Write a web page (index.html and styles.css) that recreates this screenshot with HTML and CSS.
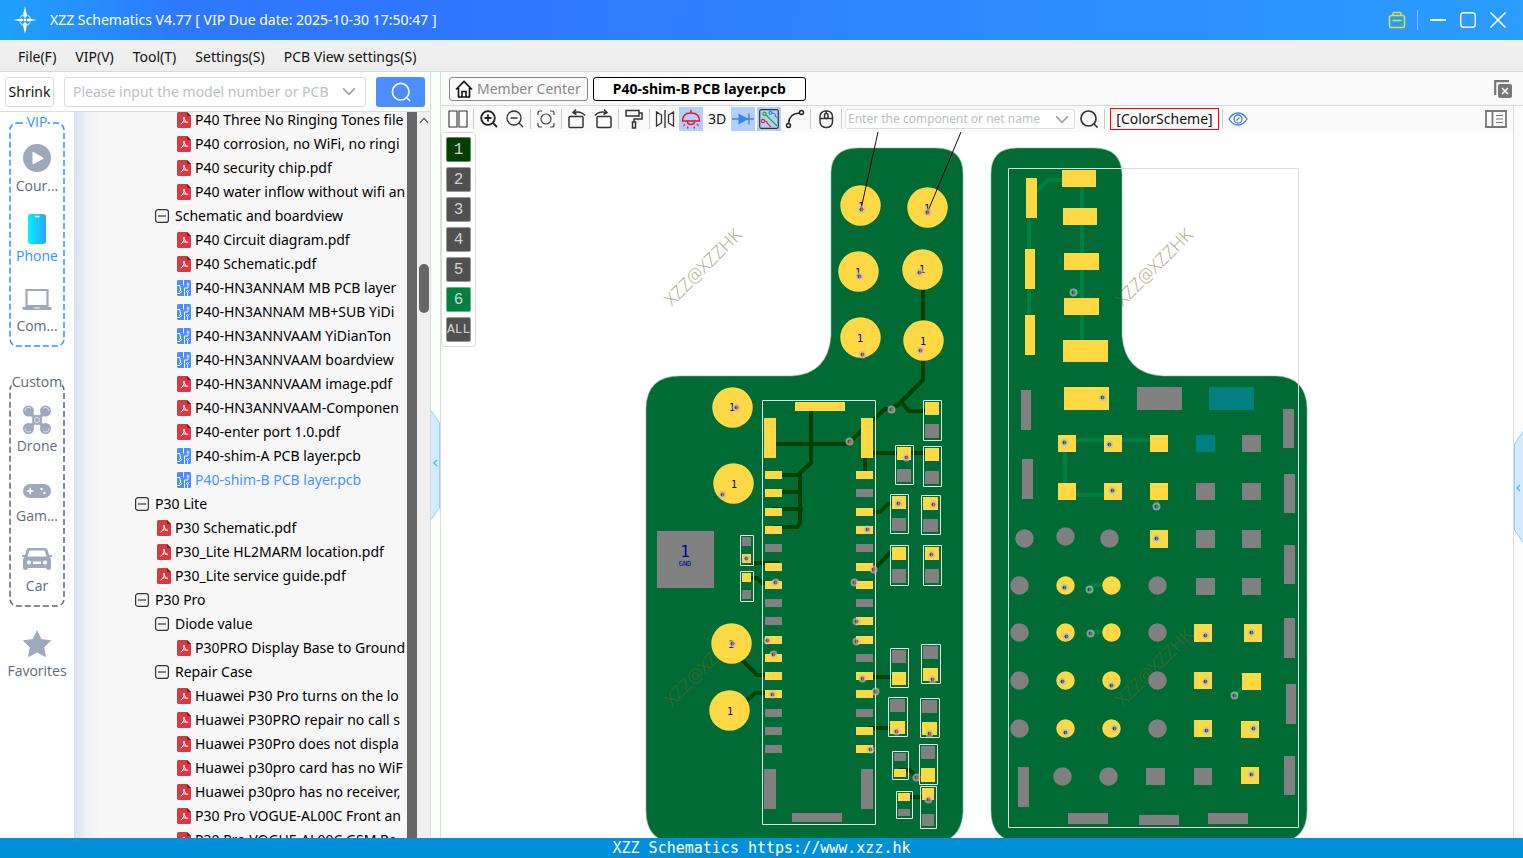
FILE: index.html
```html
<!DOCTYPE html>
<html lang="en">
<head>
<meta charset="utf-8">
<title>XZZ Schematics V4.77</title>
<link rel="stylesheet" href="styles.css">
</head>
<body>
<svg class="defs" width="0" height="0" aria-hidden="true">
  <defs>
    <symbol id="pdf" viewBox="0 0 14 16"><path d="M1.500 0H10l4 4v10.500a1.500 1.500 0 0 1-1.500 1.500h-11A1.500 1.500 0 0 1 0 14.500v-13A1.500 1.500 0 0 1 1.500 0z" fill="#d63a44"/><path d="M10 0v4h4z" fill="#8d1018"/><path d="M7 5.500c0 2.500 1 4 3.500 5M7 5.500c.3 3-.8 5-3 6.300M5.500 10.400c1.500-.8 3-.8 5 0" fill="none" stroke="#fff" stroke-width="1" stroke-linecap="round"/></symbol>
    <symbol id="pcb" viewBox="0 0 14 16"><rect width="14" height="16" rx="1.500" fill="#4a8ffa"/><path d="M6.500 0v5.500M11 5v3H7.500v3.500M3.500 8v3M7.500 11.500V16M10.500 12v4M0 5.500h3v3M0 13.500h3" fill="none" stroke="#fff" stroke-width=".9"/><g fill="#4a8ffa" stroke="#fff" stroke-width=".8"><circle cx="11" cy="4" r="1"/><circle cx="3.500" cy="11.500" r="1"/><circle cx="10.500" cy="11.500" r="1"/></g></symbol>
    <symbol id="minus" viewBox="0 0 14 14"><rect x=".6" y=".6" width="12.800" height="12.800" rx="2.500" fill="none" stroke="#333" stroke-width="1.200"/><path d="M3 7h8" stroke="#333" stroke-width="1.200"/></symbol>
    <symbol id="chev" viewBox="0 0 12 8"><path d="M.8 1.200L6 6.500l5.200-5.300" fill="none" stroke="#999fa8" stroke-width="1.400"/></symbol>
  </defs>
</svg>

<div class="app">
  <header class="titlebar">
    <svg class="logo" viewBox="0 0 26 30" width="26" height="30"><path d="M13 1l2.200 10-2.200 2-2.200-2zM13 29l2.200-10-2.200-2-2.200 2zM1 15l9-1.500 1.500 1.500L10 16.500zM25 15l-9-1.500-1.500 1.500 1.500 1.500z" fill="#fff"/><circle cx="13" cy="15" r="5.500" fill="none" stroke="#a8dcff" stroke-width="1.200" stroke-dasharray="5 3.600" stroke-dashoffset="-2"/><circle cx="13" cy="15" r="1.400" fill="#fff"/></svg>
    <h1 class="title">XZZ Schematics V4.77 [ VIP Due date: 2025-10-30 17:50:47 ]</h1>
    <div class="window-actions">
      <button class="win" aria-label="Toolbox"><svg viewBox="0 0 18 18" width="18" height="18" fill="none" stroke="#d9e342" stroke-width="1.500"><rect x="1.500" y="4.500" width="15" height="12" rx="1.800"/><path d="M5 4.500V2.800q0-1.300 1.300-1.300h5.400Q13 1.500 13 2.800v1.700M4.500 9.500h9"/></svg></button>
      <span class="win-sep"></span>
      <button class="win" aria-label="Minimize"><svg viewBox="0 0 18 18" width="18" height="18"><path d="M1 9h16" stroke="#fff" stroke-width="1.800"/></svg></button>
      <button class="win" aria-label="Maximize"><svg viewBox="0 0 18 18" width="18" height="18"><rect x="1.700" y="1.700" width="14.600" height="14.600" rx="3" fill="none" stroke="#fff" stroke-width="1.400"/></svg></button>
      <button class="win" aria-label="Close"><svg viewBox="0 0 18 18" width="18" height="18"><path d="M1.500 1.500l15 15M16.500 1.500l-15 15" stroke="#fff" stroke-width="1.600"/></svg></button>
    </div>
  </header>

  <nav class="menubar">
    <button>File(F)</button><button>VIP(V)</button><button>Tool(T)</button><button>Settings(S)</button><button>PCB View settings(S)</button>
  </nav>

  <div class="workspace">
    <aside class="left">
      <form class="search">
        <button type="button" class="shrink">Shrink</button>
        <div class="combo combo-model"><input type="text" aria-label="Model number" placeholder="Please input the model number or PCB"><button type="button" aria-label="Show models"><svg width="14" height="9"><use href="#chev"/></svg></button></div>
        <button type="button" class="go" aria-label="Search"><svg viewBox="0 0 20 20" width="20" height="20" fill="none" stroke="#fff" stroke-width="1.600"><circle cx="9.700" cy="9.700" r="8.300"/><path d="M15.500 15.500l3.500 3.300"/></svg></button>
      </form>
      <div class="browser">
        <nav class="categories">
          <section class="group vip">
            <svg class="dash" aria-hidden="true"><rect x="1" y="1" rx="7"/></svg>
            <h2>VIP</h2>
            <button class="cat"><svg viewBox="0 0 30 30"><circle cx="15" cy="15" r="14" fill="#9fa9be"/><path d="M10.500 9.500v11q0 1 1 .5l9.500-5q1-.8 0-1.500l-9.500-5.500q-1-.5-1 .5z" fill="#fff"/></svg><span>Cour...</span></button>
            <button class="cat on"><svg viewBox="0 0 30 30"><defs><linearGradient id="ph"><stop stop-color="#00f2fe"/><stop offset="1" stop-color="#33a3ff"/></linearGradient></defs><rect x="6" y="1" width="18" height="30" rx="3" fill="url(#ph)"/><path d="M13 3.500h4.500" stroke="#fff" stroke-width="1.500"/></svg><span>Phone</span></button>
            <button class="cat"><svg viewBox="0 0 30 30"><path d="M4.500 7h21v16h-21z" fill="none" stroke="#9fa9be" stroke-width="2.200"/><path d="M0 24h30l-1 3H1z" fill="#9fa9be"/><path d="M12.500 25h5" stroke="#fff"/></svg><span>Com...</span></button>
          </section>
          <section class="group custom">
            <svg class="dash" aria-hidden="true"><rect x="1" y="1" rx="7"/></svg>
            <h2>Custom</h2>
            <button class="cat"><svg viewBox="0 0 30 30"><path d="M7 9l16 16M23 9L7 25" stroke="#9fa9be" stroke-width="3.500"/><g fill="#9fa9be"><circle cx="6.500" cy="8" r="5.500"/><circle cx="23.500" cy="8" r="5.500"/><circle cx="6.500" cy="25.500" r="5.500"/><circle cx="23.500" cy="25.500" r="5.500"/><circle cx="15" cy="17" r="5"/></g><g fill="none" stroke="#e2e6ee" stroke-width="1"><path d="M3 8a3.500 3.500 0 0 1 6-2.500M27 8a3.500 3.500 0 0 0-6-2.500M3 25.500a3.500 3.500 0 0 0 6 2.500M27 25.500a3.500 3.500 0 0 1-6 2.500"/><circle cx="15" cy="17" r="2.500"/></g></svg><span>Drone</span></button>
            <button class="cat"><svg viewBox="0 0 30 30"><rect x="1" y="11" width="28" height="14" rx="7" fill="#9fa9be"/><path d="M5 18h6.500M8.200 14.800v6.500" stroke="#fff" stroke-width="1.600"/><circle cx="19.500" cy="16" r="1.200" fill="#fff"/><circle cx="22.500" cy="20" r="1.200" fill="#fff"/></svg><span>Gam...</span></button>
            <button class="cat"><svg viewBox="0 0 30 30"><path d="M7 5h16q2 0 2.600 2l2 7q1.400 1 1.400 3v8q0 2-2.500 2T24 25H6q0 2-2.500 2T1 25v-8q0-2 1.400-3l2-7Q5 5 7 5z" fill="#9fa9be"/><path d="M8 7.500h14q.8 0 1 .8l1.500 5.200h-19L7 8.300q.2-.8 1-.8z" fill="#fff"/><circle cx="7" cy="19.500" r="2" fill="#fff"/><circle cx="23" cy="19.500" r="2" fill="#fff"/><rect x="11" y="18.500" width="8" height="2.500" fill="#fff"/><path d="M0 13h3M27 13h3" stroke="#9fa9be" stroke-width="2"/></svg><span>Car</span></button>
          </section>
          <button class="cat fav"><svg viewBox="0 0 30 30"><path d="M15 3l4 8.500 9.500 1.200-6.800 6.600 1.700 9.200L15 24l-8.400 4.500 1.700-9.200L1.500 12.700 11 11.500z" fill="#9fa9be" stroke="#9fa9be" stroke-linejoin="round"/></svg><span>Favorites</span></button>
        </nav>
        <div class="tree-pane">
          <ul class="tree">
            <li class="l3"><button><svg class="file"><use href="#pdf"/></svg>P40 Three No Ringing Tones file</button></li>
            <li class="l3"><button><svg class="file"><use href="#pdf"/></svg>P40 corrosion, no WiFi, no ringi</button></li>
            <li class="l3"><button><svg class="file"><use href="#pdf"/></svg>P40 security chip.pdf</button></li>
            <li class="l3"><button><svg class="file"><use href="#pdf"/></svg>P40 water inflow without wifi an</button></li>
            <li class="l2"><button><svg class="box"><use href="#minus"/></svg>Schematic and boardview</button></li>
            <li class="l3"><button><svg class="file"><use href="#pdf"/></svg>P40 Circuit diagram.pdf</button></li>
            <li class="l3"><button><svg class="file"><use href="#pdf"/></svg>P40 Schematic.pdf</button></li>
            <li class="l3"><button><svg class="file"><use href="#pcb"/></svg>P40-HN3ANNAM MB PCB layer</button></li>
            <li class="l3"><button><svg class="file"><use href="#pcb"/></svg>P40-HN3ANNAM MB+SUB YiDi</button></li>
            <li class="l3"><button><svg class="file"><use href="#pcb"/></svg>P40-HN3ANNVAAM YiDianTon</button></li>
            <li class="l3"><button><svg class="file"><use href="#pcb"/></svg>P40-HN3ANNVAAM boardview</button></li>
            <li class="l3"><button><svg class="file"><use href="#pdf"/></svg>P40-HN3ANNVAAM image.pdf</button></li>
            <li class="l3"><button><svg class="file"><use href="#pdf"/></svg>P40-HN3ANNVAAM-Componen</button></li>
            <li class="l3"><button><svg class="file"><use href="#pdf"/></svg>P40-enter port 1.0.pdf</button></li>
            <li class="l3"><button><svg class="file"><use href="#pcb"/></svg>P40-shim-A PCB layer.pcb</button></li>
            <li class="l3 current"><button><svg class="file"><use href="#pcb"/></svg>P40-shim-B PCB layer.pcb</button></li>
            <li class="l1"><button><svg class="box"><use href="#minus"/></svg>P30 Lite</button></li>
            <li class="l2"><button><svg class="file"><use href="#pdf"/></svg>P30 Schematic.pdf</button></li>
            <li class="l2"><button><svg class="file"><use href="#pdf"/></svg>P30_Lite HL2MARM location.pdf</button></li>
            <li class="l2"><button><svg class="file"><use href="#pdf"/></svg>P30_Lite service guide.pdf</button></li>
            <li class="l1"><button><svg class="box"><use href="#minus"/></svg>P30 Pro</button></li>
            <li class="l2"><button><svg class="box"><use href="#minus"/></svg>Diode value</button></li>
            <li class="l3"><button><svg class="file"><use href="#pdf"/></svg>P30PRO Display Base to Ground</button></li>
            <li class="l2"><button><svg class="box"><use href="#minus"/></svg>Repair Case</button></li>
            <li class="l3"><button><svg class="file"><use href="#pdf"/></svg>Huawei P30 Pro turns on the lo</button></li>
            <li class="l3"><button><svg class="file"><use href="#pdf"/></svg>Huawei P30PRO repair no call s</button></li>
            <li class="l3"><button><svg class="file"><use href="#pdf"/></svg>Huawei P30Pro does not displa</button></li>
            <li class="l3"><button><svg class="file"><use href="#pdf"/></svg>Huawei p30pro card has no WiF</button></li>
            <li class="l3"><button><svg class="file"><use href="#pdf"/></svg>Huawei p30pro has no receiver,</button></li>
            <li class="l3"><button><svg class="file"><use href="#pdf"/></svg>P30 Pro VOGUE-AL00C Front an</button></li>
            <li class="l3"><button><svg class="file"><use href="#pdf"/></svg>P30 Pro VOGUE-AL00C GSM Re</button></li>
          </ul>
          <div class="divider"></div>
          <div class="scrollbar"><svg viewBox="0 0 12 8" width="10" height="7"><path d="M1 7l5-5.500L11 7" fill="none" stroke="#444" stroke-width="1.300"/></svg><span class="thumb"></span></div>
        </div>
      </div>
    </aside>

    <div class="gutter"><button aria-label="Collapse files"><svg width="9" height="110" viewBox="0 0 9 110"><path d="M0 .5L8.500 13v85L0 109.500" fill="#d4eafd" stroke="#96cdfb"/><path d="M6 50L3 53l3 3" fill="none" stroke="#53aef5" stroke-width="1.200"/></svg></button></div>

    <main class="main">
      <div class="tabs">
        <button class="tab"><svg viewBox="0 0 18 18" width="18" height="18" fill="none" stroke="#111" stroke-width="1.600"><path d="M1 9.500L9 1.500l8 8M3.500 8v9h11V8M7 17v-5.500h4V17"/></svg>Member Center</button>
        <button class="tab active">P40-shim-B PCB layer.pcb</button>
        <button class="tool close-all" aria-label="Close all tabs"><svg viewBox="0 0 18 18" width="18" height="18"><path d="M1.200 15V1.200H15" fill="none" stroke="#777" stroke-width="2.200"/><rect x="4" y="4" width="14" height="14" rx="2" fill="#777"/><path d="M8 8l6 6M14 8l-6 6" stroke="#fff" stroke-width="1.500"/></svg></button>
      </div>
      <div class="view">
        <div class="canvas-column">
          <div class="toolbar">
            <button class="tool" aria-label="Split"><svg viewBox="0 0 20 20" fill="none" stroke="#333" stroke-width="1.100"><path d="M1 2h8v16H1zM11 2h8v16h-8z"/></svg></button>
            <span class="sep"></span>
            <button class="tool" aria-label="Zoom in"><svg viewBox="0 0 20 20" fill="none" stroke="#222" stroke-width="1.800"><circle cx="9" cy="9" r="6.800"/><path d="M14 14l4 4M5.500 9h7M9 5.500v7"/></svg></button>
            <button class="tool" aria-label="Zoom out"><svg viewBox="0 0 20 20" fill="none" stroke="#333" stroke-width="1.300"><circle cx="9" cy="9" r="7"/><path d="M14 14l4 4M5.500 9h7"/></svg></button>
            <span class="sep"></span>
            <button class="tool" aria-label="Fit"><svg viewBox="0 0 20 20" fill="none" stroke="#444" stroke-width="1.200"><circle cx="10" cy="10" r="5"/><path d="M2 6V4q0-2 2-2H6M14 2h2q2 0 2 2V6M18 14v2q0 2-2 2H14M6 18H4q-2 0-2-2V14"/></svg></button>
            <span class="sep"></span>
            <button class="tool" aria-label="Rotate left"><svg viewBox="0 0 20 20" fill="none" stroke="#333" stroke-width="1.500"><rect x="2" y="7.500" width="14" height="11" rx="1"/><path d="M6 3.500q8-2 12 3M9 .5L6 3.500l3.500 2"/></svg></button>
            <button class="tool" aria-label="Rotate right"><svg viewBox="0 0 20 20" fill="none" stroke="#333" stroke-width="1.500"><rect x="4" y="7.500" width="14" height="11" rx="1"/><path d="M14 3.500q-8-2-12 3M11 .5l3 3-3.500 2"/></svg></button>
            <span class="sep"></span>
            <button class="tool" aria-label="Paint"><svg viewBox="0 0 20 20" fill="none" stroke="#333" stroke-width="1.500"><path d="M2 1.500h13V7H2zM15 4h3v6h-8v3M8.500 13h3v6h-3z"/></svg></button>
            <span class="sep"></span>
            <button class="tool" aria-label="Mirror"><svg viewBox="0 0 20 20" fill="none" stroke="#333" stroke-width="1.300"><path d="M1.500 3v14l5-3V6zM18.500 3v14l-5-3V6zM10 1v18"/></svg></button>
            <button class="tool lit" aria-label="Light"><svg viewBox="0 0 20 20" fill="none" stroke="#f01020" stroke-width="1.500"><path d="M10 1v3M1.500 12q0-8 8.500-8t8.500 8zM6.500 12.500q0 3 3.500 3t3.500-3"/><path d="M4 15l-1.500 2M16 15l1.500 2M7 17.500l-.5 2M13 17.500l.5 2" stroke-width="1.200"/></svg></button>
            <button class="tool">3D</button>
            <button class="tool lit" aria-label="Diode"><svg viewBox="0 0 24 20" class="wide"><path d="M0 10h24M18.500 4v12" stroke="#3b82f6" stroke-width="1.500"/><path d="M7 4l11 6-11 6z" fill="#3b82f6"/></svg></button>
            <button class="tool lit" aria-label="Routes"><svg viewBox="0 0 20 20" fill="none" stroke-width="1.200"><rect x=".7" y=".7" width="18.600" height="18.600" rx="1.500" stroke="#333"/><path d="M7 6l11 11" stroke="#10b530"/><circle cx="5.500" cy="4.800" r="1.600" stroke="#10b530"/><path d="M5.500 12q2.500 0 3 2.500L12 18" stroke="#e22"/><circle cx="4" cy="12" r="1.600" stroke="#e22"/><path d="M13 4q3.500 0 3.500 3l1.500 2" stroke="#2a86f0"/><circle cx="11.500" cy="3.800" r="1.500" stroke="#2a86f0"/></svg></button>
            <button class="tool" aria-label="Curve"><svg viewBox="0 0 20 20" fill="none" stroke="#222" stroke-width="1.500"><circle cx="3.500" cy="16.500" r="2"/><circle cx="16.500" cy="3.500" r="2"/><path d="M3.500 14.500Q4 4.500 14.500 4"/></svg></button>
            <span class="sep"></span>
            <button class="tool" aria-label="Mouse"><svg viewBox="0 0 20 20" fill="none" stroke="#333" stroke-width="1.500"><rect x="4" y="2" width="12.500" height="16.500" rx="5.500"/><path d="M4 9.500h12.500M10.200 2v2.500"/><rect x="8.500" y="4.500" width="3.500" height="5" rx="1.500"/></svg></button>
            <span class="sep"></span>
            <div class="combo combo-net"><input type="text" aria-label="Component or net name" placeholder="Enter the component or net name"><button type="button" aria-label="Show names"><svg width="14" height="9"><use href="#chev"/></svg></button></div>
            <button class="tool" aria-label="Find"><svg viewBox="0 0 20 20" fill="none" stroke="#333" stroke-width="1.700"><circle cx="9.500" cy="9.500" r="7.500"/><path d="M15 15l3.500 3.500"/></svg></button>
            <span class="sep"></span>
            <button class="scheme">[ColorScheme]</button>
            <span class="sep"></span>
            <button class="tool" aria-label="Visibility"><svg viewBox="0 0 20 20" fill="none" stroke="#3f83dc" stroke-width="1.300"><path d="M1 10q3.500-6 9-6t9 6q-3.500 6-9 6t-9-6z"/><circle cx="10" cy="10" r="4"/><path d="M8.500 11.500l3-3"/></svg></button>
            <button class="tool side" aria-label="Side panel"><svg viewBox="0 0 22 20" class="wide" fill="none" stroke="#777" stroke-width="1.800"><path d="M1 2h20v16H1zM7.500 2v16"/><path d="M11 6.500h7M11 10h7M11 13.500h7" stroke-width="1.200"/></svg></button>
          </div>
          <div class="canvas">
            <svg class="board" viewBox="441 132 1072 706" preserveAspectRatio="xMidYMin meet">
              <defs>
                <marker id="viaL" markerUnits="userSpaceOnUse" markerWidth="10" markerHeight="10" viewBox="-5 -5 10 10" orient="0"><circle r="4" fill="#c0c0c0" fill-opacity=".65"/><path d="M0-2a2 2 0 0 0 0 4z" fill="#2a6a3c"/><path d="M0-2a2 2 0 0 1 0 4z" fill="#e84a38"/></marker>
                <marker id="viaR" markerUnits="userSpaceOnUse" markerWidth="10" markerHeight="10" viewBox="-5 -5 10 10" orient="0"><circle r="4" fill="#c0c0c0" fill-opacity=".65"/><path d="M0-2a2 2 0 0 0 0 4z" fill="#3c3c8c"/><path d="M0-2a2 2 0 0 1 0 4z" fill="#2c8c50"/></marker>
              </defs>
              <g fill="#006b35" stroke="#7fb59a" stroke-width=".6">
                <path d="M831 172Q832 148 858 148H936Q963 148 963 174V812Q961 842 934 842H675Q646 842 646 810V408Q647 376 680 376H792Q828 374 831 336Z"/>
                <path d="M991 174Q991 148 1017 148H1094Q1121 148 1122 174V336Q1125 374 1163 376H1276Q1306 377 1307 408V810Q1307 842 1276 842H1022Q991 842 991 810Z"/>
              </g>
              <g class="mark">
                <text transform="translate(672 307) rotate(-45)">XZZ@XZZHK</text>
                <text transform="translate(1123 307) rotate(-45)">XZZ@XZZHK</text>
                <text transform="translate(672 707) rotate(-45)">XZZ@XZZHK</text>
                <text transform="translate(1123 707) rotate(-45)">XZZ@XZZHK</text>
              </g>
              <path fill="none" stroke="#004000" stroke-width="4" d="M923 280V380L898 405 889 409H885L862 430 850 442M776 444H849M901 402L909 411H925M811 410V463L800 473V523L797 527H773M782 475H800M782 492H800M772 509H803M873 453H925M865 458V471M873 512H880L888 504H892M874 569L891 552M753 563H779M751 578H757L762 583H772M740 658L757 675H766M742 705L755 693H766M873 677H892M868 728H890M899 770H910L916 777M910 797H922"/>
              <path fill="none" stroke="#008040" stroke-width="4" d="M1037 191L1048 180H1062M1029 218V315M1082 187V340M1073 292H1080M1067 440H1150M1065 452V483M1076 495H1104M1157 500V506M1089 589L1093 585H1103M1091 633L1095 632H1103M1234 695L1243 688"/>
              <path fill="#ffd943" d="M795 402h50v9h-50zM764 418h12v40h-12zM861 418h12v40h-12zM765 471h17v8h-17zM765 489h17v8h-17zM765 508h17v8h-17zM765 526h17v8h-17zM765 563h17v8h-17zM765 581h17v8h-17zM765 636h17v8h-17zM765 654h17v8h-17zM765 672h17v8h-17zM765 690h17v8h-17zM856 471h17v8h-17zM856 508h17v8h-17zM856 526h17v8h-17zM856 563h17v8h-17zM856 581h17v8h-17zM856 617h17v8h-17zM856 636h17v8h-17zM856 672h17v8h-17zM856 690h17v8h-17zM856 727h17v8h-17zM856 745h17v8h-17zM742 554h9v9h-9zM742 573h9v9h-9zM925 402h14v13h-14zM897 447h14v13h-14zM925 448h14v13h-14zM892 496h14v13h-14zM923 497h15v13h-15zM892 547h14v13h-14zM925 547h14v13h-14zM892 672h14v13h-14zM923 668h15v13h-15zM890 721h15v13h-15zM922 722h15v13h-15zM894 769h12v8h-12zM921 768h14v14h-14zM898 793h12v8h-12zM922 788h12v12h-12z
                M1026 178h11v40h-11zM1062 170h34v17h-34zM1063 208h34v17h-34zM1064 253h35v17h-35zM1064 298h35v17h-35zM1063 340h45v22h-45zM1025 249h10v40h-10zM1025 315h10v40h-10zM1064 387h45v23h-45zM1058 435h18v17h-18zM1104 435h18v17h-18zM1150 435h18v17h-18zM1058 483h18v17h-18zM1104 483h18v17h-18zM1150 483h18v17h-18zM1150 530h18v18h-18zM1194 624h18v18h-18zM1244 624h18v18h-18zM1194 672h18v17h-18zM1242 673h19v17h-19zM1194 720h18v17h-18zM1241 721h18v17h-18zM1241 767h18v17h-18z"/>
              <path fill="#808080" d="M657 531h57v57h-57zM765 544h17v8h-17zM765 599h17v8h-17zM765 617h17v8h-17zM765 709h17v8h-17zM765 727h17v8h-17zM765 745h17v8h-17zM856 489h17v8h-17zM856 544h17v8h-17zM856 599h17v8h-17zM856 654h17v8h-17zM856 709h17v8h-17zM764 769h12v40h-12zM861 769h12v40h-12zM792 813h50v9h-50zM742 537h9v9h-9zM742 590h9v9h-9zM925 424h14v14h-14zM897 469h14v13h-14zM925 471h14v13h-14zM892 518h14v13h-14zM923 519h15v13h-15zM892 569h14v14h-14zM925 569h14v14h-14zM892 650h14v13h-14zM923 646h15v13h-15zM890 699h15v13h-15zM922 700h15v13h-15zM894 753h12v8h-12zM921 746h14v13h-14zM898 809h12v7h-12zM922 814h12v12h-12z
                M1137 387h45v23h-45zM1021 390h10v40h-10zM1022 459h11v40h-11zM1283 409h11v39h-11zM1284 474h11v39h-11zM1284 545h11v39h-11zM1242 435h19v17h-19zM1196 483h19v17h-19zM1242 483h19v17h-19zM1196 530h19v18h-19zM1242 530h19v18h-19zM1196 578h19v17h-19zM1242 578h19v17h-19zM1146 768h19v17h-19zM1194 768h18v17h-18zM1018 767h11v40h-11zM1284 618h11v40h-11zM1286 684h10v40h-10zM1284 756h11v39h-11zM1068 813h40v11h-40zM1139 815h40v10h-40zM1208 813h40v11h-40z"/>
              <path fill="#008080" d="M1209 387h45v23h-45zM1196 435h19v17h-19z"/>
              <g fill="none" stroke-linecap="round">
                <path stroke="#ffd943" stroke-width="40.500" d="M732.500 407.500h0M733.500 483.500h0M731.500 643.500h0M729.500 710.500h0M860.500 205.500h0M927.500 207.500h0M858.500 271.500h0M922.500 269.500h0M860.500 337.500h0M923.500 340.500h0"/>
                <path stroke="#ffd943" stroke-width="18.500" d="M1065.500 585.500h0M1111.500 585.500h0M1065.500 632.500h0M1111.500 632.500h0M1065.500 680.500h0M1111.500 680.500h0M1065.500 728.500h0M1111.500 728.500h0"/>
                <path stroke="#808080" stroke-width="18.500" d="M1024.500 538.500h0M1065.500 536.500h0M1109.500 538.500h0M1019.500 585.500h0M1157.500 585.500h0M1019.500 632.500h0M1157.500 632.500h0M1019.500 680.500h0M1157.500 680.500h0M1019.500 728.500h0M1157.500 728.500h0M1062.500 776.500h0M1108.500 776.500h0"/>
              </g>
              <path fill="none" stroke="#e2ece4" d="M762.500 400.500h113v424h-113zM740.500 535.500h13v30h-13zM740.500 571.500h13v30h-13zM923.500 400.500h18v40h-18zM895.500 445.500h18v39h-18zM923.500 446.500h18v40h-18zM890.500 494.500h18v39h-18zM921.500 495.500h19v39h-19zM890.500 545.500h18v40h-18zM923.500 545.500h18v40h-18zM890.500 648.500h18v39h-18zM921.500 644.500h19v39h-19zM888.500 697.500h19v39h-19zM920.500 698.500h19v39h-19zM892.500 751.500h16v28h-16zM919.500 744.500h18v40h-18zM896.500 791.500h16v27h-16zM920.500 786.500h16v42h-16z"/>
              <path fill="none" stroke="#dcdcdc" d="M1008.500 168.500h290v659h-290z"/>
              <g class="pin">
                <text x="732" y="411">1</text><text x="734" y="488">1</text><text x="731" y="648">1</text><text x="730" y="715">1</text>
                <text x="861" y="210">1</text><text x="927" y="212">1</text><text x="858" y="276">1</text><text x="922" y="273">1</text><text x="860" y="342">1</text><text x="923" y="345">1</text>
                <text class="big" x="685" y="557">1</text><text class="tiny" x="685" y="566">GND</text>
              </g>
              <path fill="none" stroke="#300" d="M878 132L861 209M961 132L928 211"/>
              <path fill="none" marker-start="url(#viaL)" marker-mid="url(#viaL)" marker-end="url(#viaL)" d="M736.500 407.500L722.500 494.500 746.500 558.500 775.500 582.500 849.500 441.500 891.500 409.500 906.500 457.500 898.500 503.500 933.500 504.500 931.500 554.500 867.500 529.500 873.500 569.500 854.500 582.500 856.500 621.500 856.500 641.500 767.500 640.500 773.500 654.500 772.500 694.500 732.500 643.500 862.500 678.500 875.500 691.500 932.500 679.500 896.500 731.500 929.500 733.500 870.500 749.500 916.500 777.500 928.500 799.500 861.500 209.500 927.500 212.500 859.500 276.500 919.500 272.500 862.500 354.500 920.500 350.500"/>
              <path fill="none" marker-start="url(#viaR)" marker-mid="url(#viaR)" marker-end="url(#viaR)" d="M1073.500 292.500L1102.500 397.500 1064.500 442.500 1109.500 444.500 1112.500 490.500 1156.500 506.500 1156.500 538.500 1064.500 587.500 1089.500 589.500 1066.500 636.500 1090.500 633.500 1205.500 635.500 1251.500 632.500 1062.500 681.500 1111.500 685.500 1205.500 681.500 1234.500 695.500 1065.500 732.500 1114.500 728.500 1206.500 730.500 1253.500 728.500 1251.500 774.500"/>
            </svg>
            <div class="layers">
              <button class="dark">1</button><button>2</button><button>3</button><button>4</button><button>5</button><button class="green">6</button><button class="all">ALL</button>
            </div>
          </div>
        </div>
        <div class="gutter right"><button aria-label="Expand panel"><svg width="9" height="112" viewBox="0 0 9 112"><path d="M9 .5L.5 13v86L9 111.500" fill="#d4eafd" stroke="#96cdfb"/><path d="M6 54L3 57l3 3" fill="none" stroke="#53aef5" stroke-width="1.200"/></svg></button></div>
      </div>
    </main>
  </div>
  <footer class="status">XZZ Schematics https://www.xzz.hk</footer>
</div>
</body>
</html>
```
FILE: styles.css
```css
* { box-sizing: border-box; }
body { margin: 0; font: 14px/20px "Noto Sans", "Open Sans", sans-serif; color: #111; }
button { font: inherit; color: inherit; background: none; border: 0; padding: 0; margin: 0; }
input { font: inherit; border: 0; background: none; padding: 0; min-width: 0; outline: 0; }
input::placeholder { color: #bcc0c6; opacity: 1; }
svg { display: block; flex: none; }
.defs { position: absolute; }
.app { height: 100vh; display: flex; flex-direction: column; overflow: hidden; }

.titlebar { flex: none; height: 40px; display: flex; align-items: center; padding: 0 16px 0 12px; gap: 12px; background: linear-gradient(95deg, #1fa2fb 0, #2e78fd 12%, #2f76ff 30%, #2d88ff 62%, #2a9dff 100%); color: #fff; }
.title { margin: 0; font-size: 14px; font-weight: 400; }
.window-actions { margin-left: auto; display: flex; align-items: center; gap: 12px; }
.win-sep { width: 1px; height: 20px; background: #7dc1ff; margin: 0 -1px; }

.menubar { flex: none; height: 32px; display: flex; align-items: center; gap: 19px; padding: 2px 18px 0; background: #efefef; border-bottom: 1px solid #d8d8d8; }
.workspace { flex: 1; min-height: 0; display: flex; }

.left { width: 431px; flex: none; display: flex; flex-direction: column; border-right: 1px solid #dcdcdc; }
.search { flex: none; height: 40px; display: flex; align-items: center; padding: 0 5px; border-bottom: 1px solid #dcdcdc; }
.shrink { width: 49px; height: 30px; border: 1px solid #dcdcdc; border-radius: 3px; margin-right: 10px; }
.combo { display: flex; align-items: center; border: 1px solid #dcdcdc; border-radius: 3px; background: #fff; }
.combo input { flex: 1; }
.combo-model { flex: 1; height: 30px; padding: 0 9px 0 8px; gap: 5px; margin-right: 10px; }
.go { width: 49px; height: 30px; border-radius: 3px; background: #4b8ffd; display: grid; place-items: center; }
.browser { flex: 1; min-height: 0; display: flex; }

.categories { width: 74px; flex: none; padding: 10px 9px 0; display: flex; flex-direction: column; align-items: center; color: #626b7d; font-family: "Open Sans", "Noto Sans", sans-serif; }
.group { position: relative; width: 56px; padding: 21px 0 11px; display: flex; flex-direction: column; align-items: center; gap: 17px; margin-bottom: 35px; }
.group.custom { margin-bottom: 21px; }
.group h2 { position: absolute; top: -10px; left: 50%; transform: translateX(-50%); margin: 0; font-size: 14px; font-weight: 400; background: #fff; }
.dash { position: absolute; left: 0; top: 0; width: 100%; height: 100%; }
.dash rect { width: calc(100% - 2px); height: calc(100% - 2px); fill: none; stroke: #5f6675; stroke-width: 1.5px; stroke-dasharray: 6px 3px; }
.vip .dash rect { stroke: #2b96fb; }
.vip h2, .cat.on { color: #2b96fb; }
.cat { position: relative; display: flex; flex-direction: column; align-items: center; gap: 3px; }
.cat svg { width: 30px; height: 30px; overflow: visible; }

.tree-pane { flex: 1; min-width: 0; display: flex; background: linear-gradient(90deg, #d9e2f1 0, #edf0f5 12px, #f7f7f7 26px); }
.tree { flex: 1; min-width: 0; margin: -4px 0 0; padding: 0; list-style: none; overflow: hidden; clip-path: inset(4px 0 0 0); }
.tree li { height: 24px; }
.tree button { height: 24px; display: flex; align-items: center; white-space: nowrap; color: #000; line-height: 22px; }
.l1 { padding-left: 61px; }
.l2 { padding-left: 81px; }
.l3 { padding-left: 101px; }
.tree .current button { color: #4b93ff; }
.file { width: 14px; height: 16px; margin: 0 4px 0 2px; }
.box { width: 14px; height: 14px; margin-right: 6px; }
.divider { width: 10px; flex: none; background: #666; }
.scrollbar { width: 13px; flex: none; background: #efefef; display: flex; flex-direction: column; align-items: center; padding-top: 5px; }
.thumb { width: 10px; height: 49px; border-radius: 5px; background: #666; margin-top: 140px; }

.gutter { width: 9px; flex: none; background: #f9fff9; padding-top: 338px; }
.gutter.right { width: 10px; background: #fbfbfb; border-left: 1px solid #dcdcdc; padding-top: 325px; }

.main { flex: 1; min-width: 0; display: flex; flex-direction: column; border-left: 1px solid #dcdcdc; }
.tabs { flex: none; height: 34px; display: flex; align-items: center; gap: 5px; padding: 0 11px 0 8px; background: #fafafa; border-bottom: 1px solid #d8d8d8; }
.tab { height: 24px; display: flex; align-items: center; gap: 4px; padding: 0 6px 0 5px; border: 1px solid #888; border-radius: 3px; color: #888; }
.tab.active { padding: 0 19px; border-color: #000; color: #000; font-weight: 700; background: #fff; }
.close-all { margin-left: auto; }
.view { flex: 1; min-height: 0; display: flex; }
.canvas-column { flex: 1; min-width: 0; display: flex; flex-direction: column; }
.toolbar { flex: none; height: 26px; display: flex; align-items: center; gap: 2px; padding: 0 5px; background: #fafafa; }
.tool { width: 24px; height: 24px; flex: none; display: grid; place-items: center; }
.close-all { width: 18px; }
.toolbar .tool svg { width: 20px; height: 20px; }
.toolbar .tool svg.wide { width: 22px; }
.lit { background: #b5cffb; }
.sep { width: 1px; height: 20px; margin: 0 1px; background: #ccc; flex: none; }
.combo-net { width: 230px; height: 20px; padding: 0 5px 0 2px; gap: 6px; font-size: 12px; }
.scheme { height: 22px; width: 109px; margin-left: 2px; border: 1px solid #f00; }
.side { margin-left: auto; }

.canvas { flex: 1; min-height: 0; position: relative; background: #fff; overflow: hidden; }
.board { width: 100%; height: 100%; }
.mark { font: 300 18px "Open Sans", sans-serif; fill: #7d6428; fill-opacity: .6; }
.pin { font: 10px "DejaVu Sans Mono", monospace; fill: #0000a0; text-anchor: middle; }
.pin .big { font-size: 16px; }
.pin .tiny { font-size: 7px; }
.layers { position: absolute; left: 0; top: 0; width: 35px; padding: 4px; border: 1px solid #dcdcdc; border-radius: 3px; background: #fff; display: flex; flex-direction: column; gap: 5px; }
.layers button { height: 25px; border: 1px solid #999; border-radius: 2px; background: #505050; color: #d0d0d0; font: 16px "Liberation Mono", monospace; }
.layers .dark { background: #004000; border-color: #5a8f5a; }
.layers .green { background: #008040; border-color: #66b38a; }
.layers .all { font-size: 13px; }

.status { flex: none; height: 20px; background: #0090da; color: #fff; text-align: center; font: 15px/20px "DejaVu Sans Mono", monospace; }
```
